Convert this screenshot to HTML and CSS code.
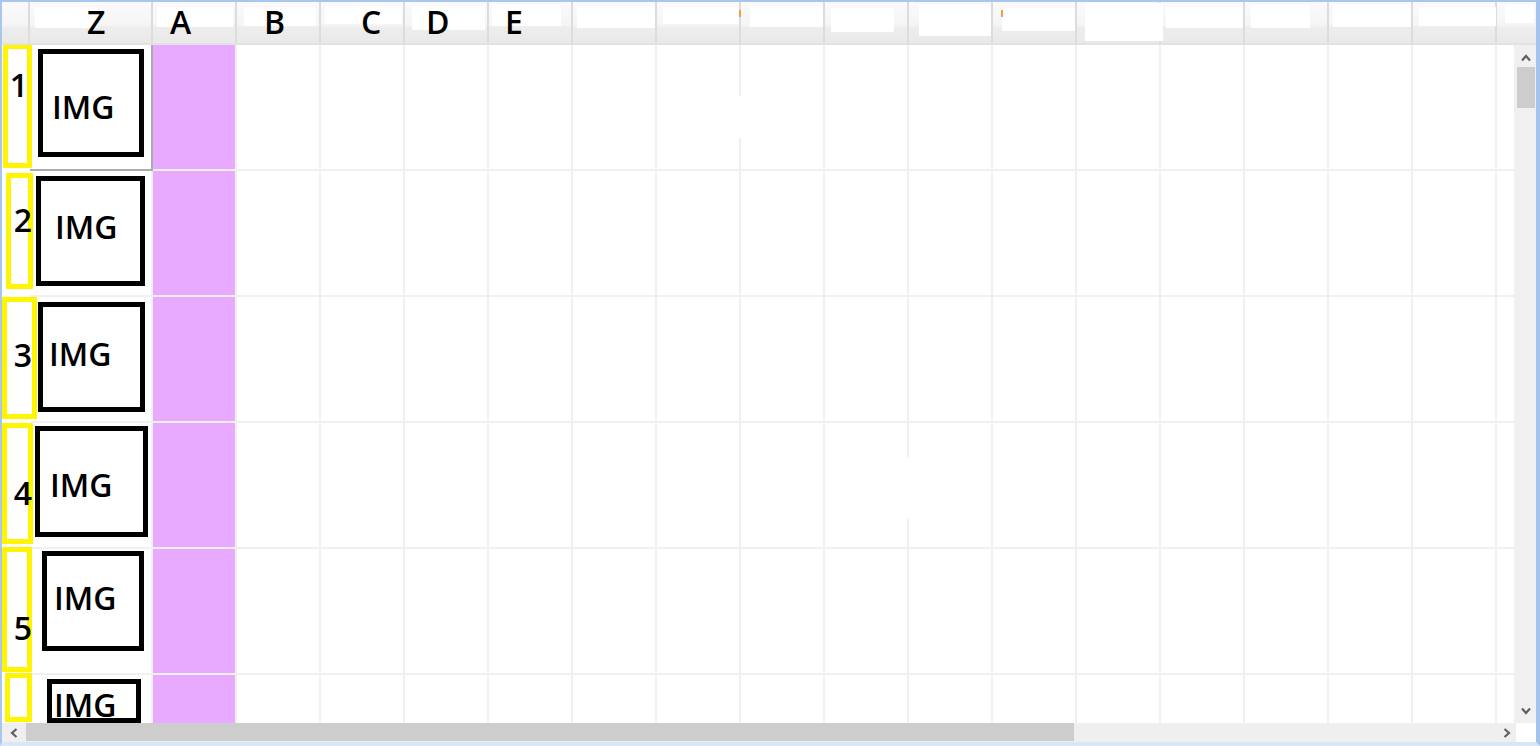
FILE: index.html
```html
<!DOCTYPE html>
<html>
<head>
<meta charset="utf-8">
<link rel="stylesheet" href="styles.css">
</head>
<body>
<div class="frame">
  <div class="header">
    <div class="hc corner"></div>
    <div class="hc h1"><span class="glare"></span><span class="lbl">Z</span></div>
    <div class="hc h2"><span class="glare"></span><span class="lbl">A</span></div>
    <div class="hc h3"><span class="glare"></span><span class="lbl">B</span></div>
    <div class="hc h4"><span class="glare"></span><span class="lbl">C</span></div>
    <div class="hc h5"><span class="glare"></span><span class="lbl">D</span></div>
    <div class="hc h6"><span class="glare"></span><span class="lbl">E</span></div>
    <div class="hc h7"><span class="glare"></span></div>
    <div class="hc h8"><span class="glare"></span><span class="tick"></span></div>
    <div class="hc h9"><span class="glare"></span></div>
    <div class="hc h10"><span class="glare"></span></div>
    <div class="hc h11"><span class="glare"></span></div>
    <div class="hc h12"><span class="glare"></span><span class="tick"></span></div>
    <div class="hc h13"><span class="glare"></span></div>
    <div class="hc h14"><span class="glare"></span></div>
    <div class="hc h15"><span class="glare"></span></div>
    <div class="hc h16"><span class="glare"></span></div>
    <div class="hc h17"><span class="glare"></span></div>
    <div class="hc h18 last"><span class="glare"></span></div>
  </div>

  <div class="main">
    <div class="sheet">
      <!-- row 1 -->
      <div class="rh"><span class="yb y1"></span><span class="num n1">1</span></div>
      <div class="cell zc sel"><span class="img i1">IMG</span></div>
      <div class="cell pk"></div>
      <div class="cell"></div><div class="cell"></div><div class="cell"></div><div class="cell"></div><div class="cell"></div>
      <div class="cell gap-a"></div><div class="cell"></div><div class="cell"></div><div class="cell"></div><div class="cell"></div>
      <div class="cell"></div><div class="cell"></div><div class="cell"></div><div class="cell"></div><div class="cell"></div>
      <div class="cell"></div>
      <!-- row 2 -->
      <div class="rh"><span class="yb y2"></span><span class="num n2">2</span></div>
      <div class="cell zc"><span class="img i2">IMG</span></div>
      <div class="cell pk"></div>
      <div class="cell"></div><div class="cell"></div><div class="cell"></div><div class="cell"></div><div class="cell"></div>
      <div class="cell"></div><div class="cell"></div><div class="cell"></div><div class="cell"></div><div class="cell"></div>
      <div class="cell"></div><div class="cell"></div><div class="cell"></div><div class="cell"></div><div class="cell"></div>
      <div class="cell"></div>
      <!-- row 3 -->
      <div class="rh"><span class="yb y3"></span><span class="num n3">3</span></div>
      <div class="cell zc"><span class="img i3">IMG</span></div>
      <div class="cell pk"></div>
      <div class="cell"></div><div class="cell"></div><div class="cell"></div><div class="cell"></div><div class="cell"></div>
      <div class="cell"></div><div class="cell"></div><div class="cell"></div><div class="cell"></div><div class="cell"></div>
      <div class="cell"></div><div class="cell"></div><div class="cell"></div><div class="cell"></div><div class="cell"></div>
      <div class="cell"></div>
      <!-- row 4 -->
      <div class="rh"><span class="yb y4"></span><span class="num n4">4</span></div>
      <div class="cell zc"><span class="img i4">IMG</span></div>
      <div class="cell pk"></div>
      <div class="cell"></div><div class="cell"></div><div class="cell"></div><div class="cell"></div><div class="cell"></div>
      <div class="cell"></div><div class="cell"></div><div class="cell gap-b"></div><div class="cell"></div><div class="cell"></div>
      <div class="cell"></div><div class="cell"></div><div class="cell"></div><div class="cell"></div><div class="cell"></div>
      <div class="cell"></div>
      <!-- row 5 -->
      <div class="rh"><span class="yb y5"></span><span class="num n5">5</span></div>
      <div class="cell zc"><span class="img i5">IMG</span></div>
      <div class="cell pk"></div>
      <div class="cell"></div><div class="cell"></div><div class="cell"></div><div class="cell"></div><div class="cell"></div>
      <div class="cell"></div><div class="cell"></div><div class="cell"></div><div class="cell"></div><div class="cell"></div>
      <div class="cell"></div><div class="cell"></div><div class="cell"></div><div class="cell"></div><div class="cell"></div>
      <div class="cell"></div>
      <!-- row 6 -->
      <div class="rh"><span class="yb y6"></span></div>
      <div class="cell zc"><span class="img i6">IMG</span></div>
      <div class="cell pk"></div>
      <div class="cell"></div><div class="cell"></div><div class="cell"></div><div class="cell"></div><div class="cell"></div>
      <div class="cell"></div><div class="cell"></div><div class="cell"></div><div class="cell"></div><div class="cell"></div>
      <div class="cell"></div><div class="cell"></div><div class="cell"></div><div class="cell"></div><div class="cell"></div>
      <div class="cell"></div>
    </div>

    <div class="vscroll">
      <div class="vbtn up">
        <svg width="10" height="8" viewBox="0 0 10 8"><polyline points="1,6.5 5,2 9,6.5" fill="none" stroke="#606060" stroke-width="2.2"/></svg>
      </div>
      <div class="vthumb"></div>
      <div class="vtrack"></div>
      <div class="vbtn down">
        <svg width="10" height="8" viewBox="0 0 10 8"><polyline points="1,1.5 5,6 9,1.5" fill="none" stroke="#606060" stroke-width="2.2"/></svg>
      </div>
    </div>
  </div>

  <div class="hscroll">
    <div class="hbtn left">
      <svg width="8" height="10" viewBox="0 0 8 10"><polyline points="6.5,1 2,5 6.5,9" fill="none" stroke="#606060" stroke-width="2.2"/></svg>
    </div>
    <div class="hthumb"></div>
    <div class="htrack">
      <div class="hbtn right">
        <svg width="8" height="10" viewBox="0 0 8 10"><polyline points="1.5,1 6,5 1.5,9" fill="none" stroke="#606060" stroke-width="2.2"/></svg>
      </div>
    </div>
    <div class="hcorner"></div>
  </div>
</div>
</body>
</html>
```

FILE: styles.css
```css
* { box-sizing: border-box; }

html, body {
  margin: 0;
  padding: 0;
  background: #ffffff;
}

body {
  font-family: "Open Sans", "Noto Sans", sans-serif;
  font-weight: 600;
  color: #000;
}

.frame {
  width: 1540px;
  height: 746px;
  border-top: 2px solid #a9c6ee;
  border-left: 2px solid #a9c6ee;
  border-right: 4px solid #a3c2ee;
  border-bottom: 4px solid #dbe6f5;
  display: flex;
  flex-direction: column;
  overflow: hidden;
}

/* ---------- column header ---------- */
.header {
  flex: none;
  height: 43px;
  display: grid;
  grid-template-columns: 28px 123px repeat(16, 84px) 1fr;
  background: linear-gradient(to bottom, #fafafa 0%, #f5f5f5 56%, #ededed 62%, #e9e9ea 100%);
  border-bottom: 2px solid #e2e2e2;
}

.hc {
  display: grid;
  border-right: 2px solid #dcdcdc;
  min-width: 0;
}
.hc.last { border-right: none; }
.hc > * { grid-area: 1 / 1; align-self: start; justify-self: start; }

.glare { background: #fff; display: block; }

.lbl {
  font-size: 32px;
  line-height: 32px;
  margin-top: 4px;
}

.tick {
  width: 2px;
  height: 7px;
  margin-top: 8px;
  background: #f0a040;
}

.h1 .glare  { margin: 5px 0 0 5px;  width: 63px; height: 21px; }
.h2 .glare  { margin: 5px 0 0 4px;  width: 76px; height: 20px; }
.h3 .glare  { margin: 5px 0 0 7px;  width: 72px; height: 19px; }
.h4 .glare  { margin: 4px 0 0 4px;  width: 77px; height: 18px; }
.h5 .glare  { margin: 4px 0 0 7px;  width: 73px; height: 24px; }
.h6 .glare  { margin: 3px 0 0 3px;  width: 69px; height: 21px; }
.h7 .glare  { margin: 4px 0 0 4px;  width: 78px; height: 22px; }
.h8 .glare  { margin: 5px 0 0 6px;  width: 76px; height: 17px; }
.h9 .glare  { margin: 4px 0 0 9px;  width: 73px; height: 21px; }
.h10 .glare { margin: 6px 0 0 6px;  width: 63px; height: 24px; }
.h11 .glare { margin: 3px 0 0 10px; width: 72px; height: 31px; }
.h12 .glare { margin: 6px 0 0 9px;  width: 73px; height: 23px; }
.h13 .glare { margin: 1px 0 0 8px;  width: 78px; height: 38px; }
.h14 .glare { margin: 5px 0 0 5px;  width: 77px; height: 21px; }
.h15 .glare { margin: 3px 0 0 6px;  width: 59px; height: 23px; }
.h16 .glare { margin: 3px 0 0 4px;  width: 78px; height: 22px; }
.h17 .glare { margin: 5px 0 0 6px;  width: 77px; height: 19px; }
.h18 .glare { margin: 3px 0 0 8px;  width: 29px; height: 18px; }

.h8 .tick  { margin-left: 82px; }
.h12 .tick { margin-left: 8px; }

.h1 .lbl { margin-left: 57px; }
.h2 .lbl { margin-left: 17px; }
.h3 .lbl { margin-left: 27px; }
.h4 .lbl { margin-left: 40px; }
.h5 .lbl { margin-left: 21px; }
.h6 .lbl { margin-left: 16px; }

/* ---------- sheet body ---------- */
.main {
  flex: 1;
  display: flex;
  min-height: 0;
}

.sheet {
  flex: 1;
  min-width: 0;
  display: grid;
  grid-template-columns: 28px 123px repeat(16, 84px) 1fr;
  grid-auto-rows: 126px;
  align-content: start;
  overflow: hidden;
}

.cell {
  border-right: 2px solid #f0f0f0;
  border-bottom: 2px solid #f0f0f0;
}

.pk { background: #e8aafe; }

/* grid lines with a short break in them */
.gap-a {
  border-right-color: transparent;
  background:
    linear-gradient(#f0f0f0, #f0f0f0) right top / 2px 51px no-repeat border-box,
    linear-gradient(#f0f0f0, #f0f0f0) right bottom / 2px 33px no-repeat border-box;
}
.gap-b {
  border-right-color: transparent;
  background:
    linear-gradient(#f0f0f0, #f0f0f0) right top / 2px 34px no-repeat border-box,
    linear-gradient(#f0f0f0, #f0f0f0) right bottom / 2px 30px no-repeat border-box;
}

.rh {
  display: grid;
}
.rh > * { grid-area: 1 / 1; align-self: start; justify-self: start; }

.yb {
  display: block;
  border: 5px solid #fff500;
}
.y1 { margin: -1px 0 0 1px; width: 29px; height: 124px; }
.y2 { margin: 2px 0 0 4px;  width: 27px; height: 116px; }
.y3 { margin: 0 0 0 0;      width: 35px; height: 122px; }
.y4 { margin: 0 0 0 0;      width: 31px; height: 121px; }
.y5 { margin: -2px 0 0 0;   width: 30px; height: 125px; }
.y6 { margin: -2px 0 0 3px; width: 27px; height: 49px; }

.num {
  width: 20px;
  text-align: center;
  font-size: 32px;
  line-height: 32px;
}
.n1 { margin: 24px 0 0 7px; }
.n2 { margin: 33px 0 0 11px; }
.n3 { margin: 42px 0 0 11px; }
.n4 { margin: 54px 0 0 11px; }
.n5 { margin: 63px 0 0 11px; }

.zc {
  display: grid;
}
.zc > * { grid-area: 1 / 1; align-self: start; justify-self: start; }

.sel {
  border-right: 2px solid #ababab;
  border-bottom: 2px solid #ababab;
  box-shadow: 0 -2px 0 #b5b5b5;
}

.img {
  display: block;
  border: 5px solid #000;
  font-size: 32px;
  line-height: 32px;
  white-space: nowrap;
  overflow: hidden;
}
.i1 { margin: 4px 0 0 8px;  width: 106px; height: 108px; padding: 37px 0 0 9px; }
.i2 { margin: 5px 0 0 6px;  width: 109px; height: 110px; padding: 30px 0 0 14px; }
.i3 { margin: 5px 0 0 8px;  width: 107px; height: 110px; padding: 31px 0 0 6px; }
.i4 { margin: 3px 0 0 5px;  width: 113px; height: 111px; padding: 38px 0 0 10px; }
.i5 { margin: 2px 0 0 12px; width: 102px; height: 100px; padding: 26px 0 0 7px; }
.i6 { margin: 4px 0 0 17px; width: 94px;  height: 44px;  padding: 5px 0 0 2px; }

/* ---------- scrollbars ---------- */
.vscroll {
  flex: none;
  width: 20px;
  background: #f0f0f0;
  display: flex;
  flex-direction: column;
  align-items: center;
}

.vbtn {
  flex: none;
  height: 20px;
  width: 100%;
  display: flex;
  align-items: center;
  justify-content: center;
}
.vbtn.up { padding-top: 5px; }
.vbtn.down { padding-bottom: 4px; }
.vbtn svg { display: block; }

.vthumb {
  flex: none;
  width: 18px;
  height: 41px;
  margin-top: 2px;
  background: #cdcdcd;
}
.vtrack { flex: 1; }

.hscroll {
  flex: none;
  height: 19px;
  display: flex;
  background: #efefef;
}

.hbtn {
  flex: none;
  display: flex;
  align-items: center;
  justify-content: center;
  height: 100%;
}
.hbtn.left { width: 24px; }
.hbtn.right { width: 19px; margin-left: auto; }
.hbtn svg { display: block; }

.hthumb {
  flex: none;
  width: 1048px;
  height: 18px;
  background: #cdcdcd;
}

.htrack {
  flex: 1;
  display: flex;
}

.hcorner {
  flex: none;
  width: 20px;
  background: #fff;
}
```
